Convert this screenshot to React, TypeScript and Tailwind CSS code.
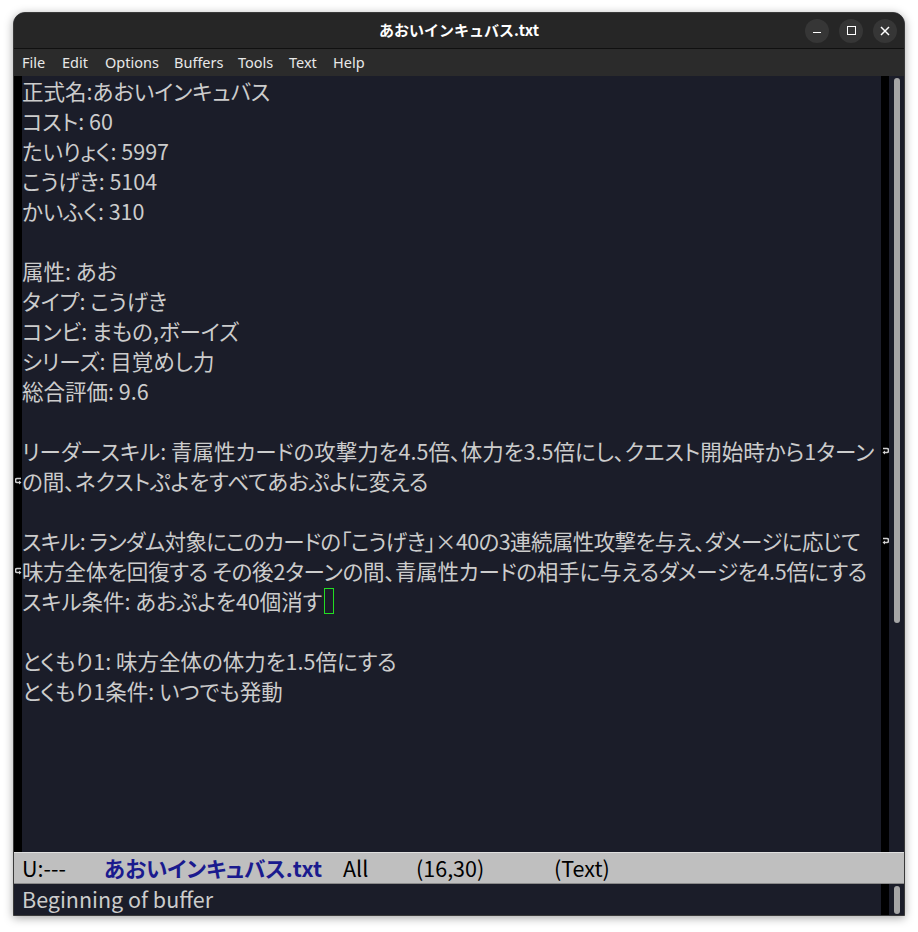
import React from "react";

const lines: { t: string; wrapEnd?: boolean; wrapStart?: boolean; cursor?: boolean; tight?: number }[] = [
  { t: "正式名:あおいインキュバス" },
  { t: "コスト: 60" },
  { t: "たいりょく: 5997" },
  { t: "こうげき: 5104" },
  { t: "かいふく: 310" },
  { t: "" },
  { t: "属性: あお" },
  { t: "タイプ: こうげき" },
  { t: "コンビ: まもの,ボーイズ" },
  { t: "シリーズ: 目覚めし力" },
  { t: "総合評価: 9.6" },
  { t: "" },
  { t: "リーダースキル: 青属性カードの攻撃力を4.5倍、体力を3.5倍にし、クエスト開始時から1ターン", wrapEnd: true },
  { t: "の間、ネクストぷよをすべてあおぷよに変える", wrapStart: true },
  { t: "" },
  { t: "スキル: ランダム対象にこのカードの「こうげき」×40の3連続属性攻撃を与え、ダメージに応じて", wrapEnd: true, tight: 2 },
  { t: "味方全体を回復する その後2ターンの間、青属性カードの相手に与えるダメージを4.5倍にする", wrapStart: true, tight: 1 },
  { t: "スキル条件: あおぷよを40個消す", cursor: true },
  { t: "" },
  { t: "とくもり1: 味方全体の体力を1.5倍にする" },
  { t: "とくもり1条件: いつでも発動" },
];

const RightArrow = () => (
  <svg width="7" height="9" viewBox="0 0 7 9">
    <path d="M1 1.5 H5 Q6.5 1.5 6.5 3.5 Q6.5 5.5 5 5.5 H2" stroke="#d0d0d0" strokeWidth="1.6" fill="none" />
    <path d="M0.5 5.5 L3 3.5 L3 7.5 Z" fill="#d0d0d0" />
  </svg>
);

const LeftArrow = () => (
  <svg width="7" height="9" viewBox="0 0 7 9">
    <path d="M6 1.5 H2 Q0.5 1.5 0.5 3.5 Q0.5 5.5 2 5.5 H5" stroke="#d0d0d0" strokeWidth="1.6" fill="none" />
    <path d="M6.5 5.5 L4 3.5 L4 7.5 Z" fill="#d0d0d0" />
  </svg>
);

export default function App() {
  const mono = { fontFamily: '"Noto Sans CJK JP", "Noto Sans", sans-serif' };
  return (
    <div className="w-[918px] h-[932px] bg-white relative overflow-hidden">
      <div className="absolute left-[13px] top-[12px] w-[892px] h-[904px] rounded-t-[12px] overflow-hidden shadow-[0_2px_10px_rgba(0,0,0,0.35)] flex flex-col bg-[#1b1d29] border border-[#3a3a3a]">
        {/* Title bar */}
        <div className="h-[36px] bg-[#262626] border-b border-[#101010] flex items-center relative shrink-0">
          <div
            className="absolute left-0 right-0 text-center text-white text-[15px] font-bold"
            style={{ fontFamily: '"Noto Sans CJK JP", "Noto Sans", sans-serif' }}
          >
            あおいインキュバス.txt
          </div>
          <div className="ml-auto flex items-center gap-[10px] pr-[7px]">
            <div className="w-[24px] h-[24px] rounded-full bg-[#363636] flex items-center justify-center">
              <div className="w-[8px] h-[1.5px] bg-white mt-[4px]" />
            </div>
            <div className="w-[24px] h-[24px] rounded-full bg-[#363636] flex items-center justify-center">
              <div className="w-[9px] h-[9px] border-[1.5px] border-white" />
            </div>
            <div className="w-[24px] h-[24px] rounded-full bg-[#363636] flex items-center justify-center">
              <svg width="10" height="10" viewBox="0 0 10 10">
                <path d="M1 1 L9 9 M9 1 L1 9" stroke="white" strokeWidth="1.5" />
              </svg>
            </div>
          </div>
        </div>
        {/* Menu bar */}
        <div
          className="h-[27px] bg-[#2b2b2b] flex items-center text-[14.5px] text-[#e8e8e8] pl-[8px] shrink-0"
          style={{ fontFamily: '"Noto Sans", "DejaVu Sans", sans-serif' }}
        >
          <span className="w-[40px]">File</span>
          <span className="w-[43px]">Edit</span>
          <span className="w-[69px]">Options</span>
          <span className="w-[64px]">Buffers</span>
          <span className="w-[51px]">Tools</span>
          <span className="w-[44px]">Text</span>
          <span>Help</span>
        </div>
        {/* Editor */}
        <div className="flex flex-1 min-h-0">
          <div className="w-[8px] bg-black shrink-0 flex flex-col">
            {lines.map((l, i) => (
              <div key={i} className="h-[30px] flex items-center justify-center">
                {l.wrapStart ? <LeftArrow /> : null}
              </div>
            ))}
          </div>
          <div
            className="flex-1 text-[#cccccc] text-[21.5px] overflow-hidden [font-feature-settings:'palt']"
            style={mono}
          >
            {lines.map((l, i) => (
              <div key={i} className="h-[30px] leading-[30px] whitespace-nowrap flex items-center">
                <span
                  className={
                    l.tight === 2 ? "tracking-[-0.6px]" : l.tight === 1 ? "tracking-[-0.2px]" : ""
                  }
                >
                  {l.t}
                </span>
                {l.cursor ? <span className="inline-block w-[10px] h-[26px] border border-[#22dd22] ml-[2px]" /> : null}
              </div>
            ))}
          </div>
          <div className="w-[8px] bg-black shrink-0 flex flex-col">
            {lines.map((l, i) => (
              <div key={i} className="h-[30px] flex items-center justify-center">
                {l.wrapEnd ? <RightArrow /> : null}
              </div>
            ))}
          </div>
          <div className="w-[15px] shrink-0 pt-[2px] flex justify-center">
            <div className="w-[6px] h-[545px] rounded-full bg-[#a6a6a6]" />
          </div>
        </div>
        {/* Mode line */}
        <div
          className="h-[32px] bg-[#bfbfbf] border-t border-[#e0e0e0] border-b border-b-[#8a8a8a] flex items-center text-[21.5px] text-black pl-[8px] whitespace-nowrap shrink-0 [font-feature-settings:'palt']"
          style={mono}
        >
          <span className="w-[82px]">U:---</span>
          <span className="font-bold text-[#1a1a8e] w-[239px]">あおいインキュバス.txt</span>
          <span className="w-[73px]">All</span>
          <span className="w-[138px]">(16,30)</span>
          <span>(Text)</span>
        </div>
        {/* Echo area */}
        <div className="h-[31px] flex shrink-0">
          <div className="flex-1 pl-[8px] text-[#cccccc] text-[21.5px] leading-[30px]" style={mono}>
            Beginning of buffer
          </div>
          <div className="w-[8px] bg-black" />
          <div className="w-[15px] flex justify-center pt-[2px]">
            <div className="w-[6px] h-[28px] rounded-full bg-[#a6a6a6]" />
          </div>
        </div>
      </div>
    </div>
  );
}
